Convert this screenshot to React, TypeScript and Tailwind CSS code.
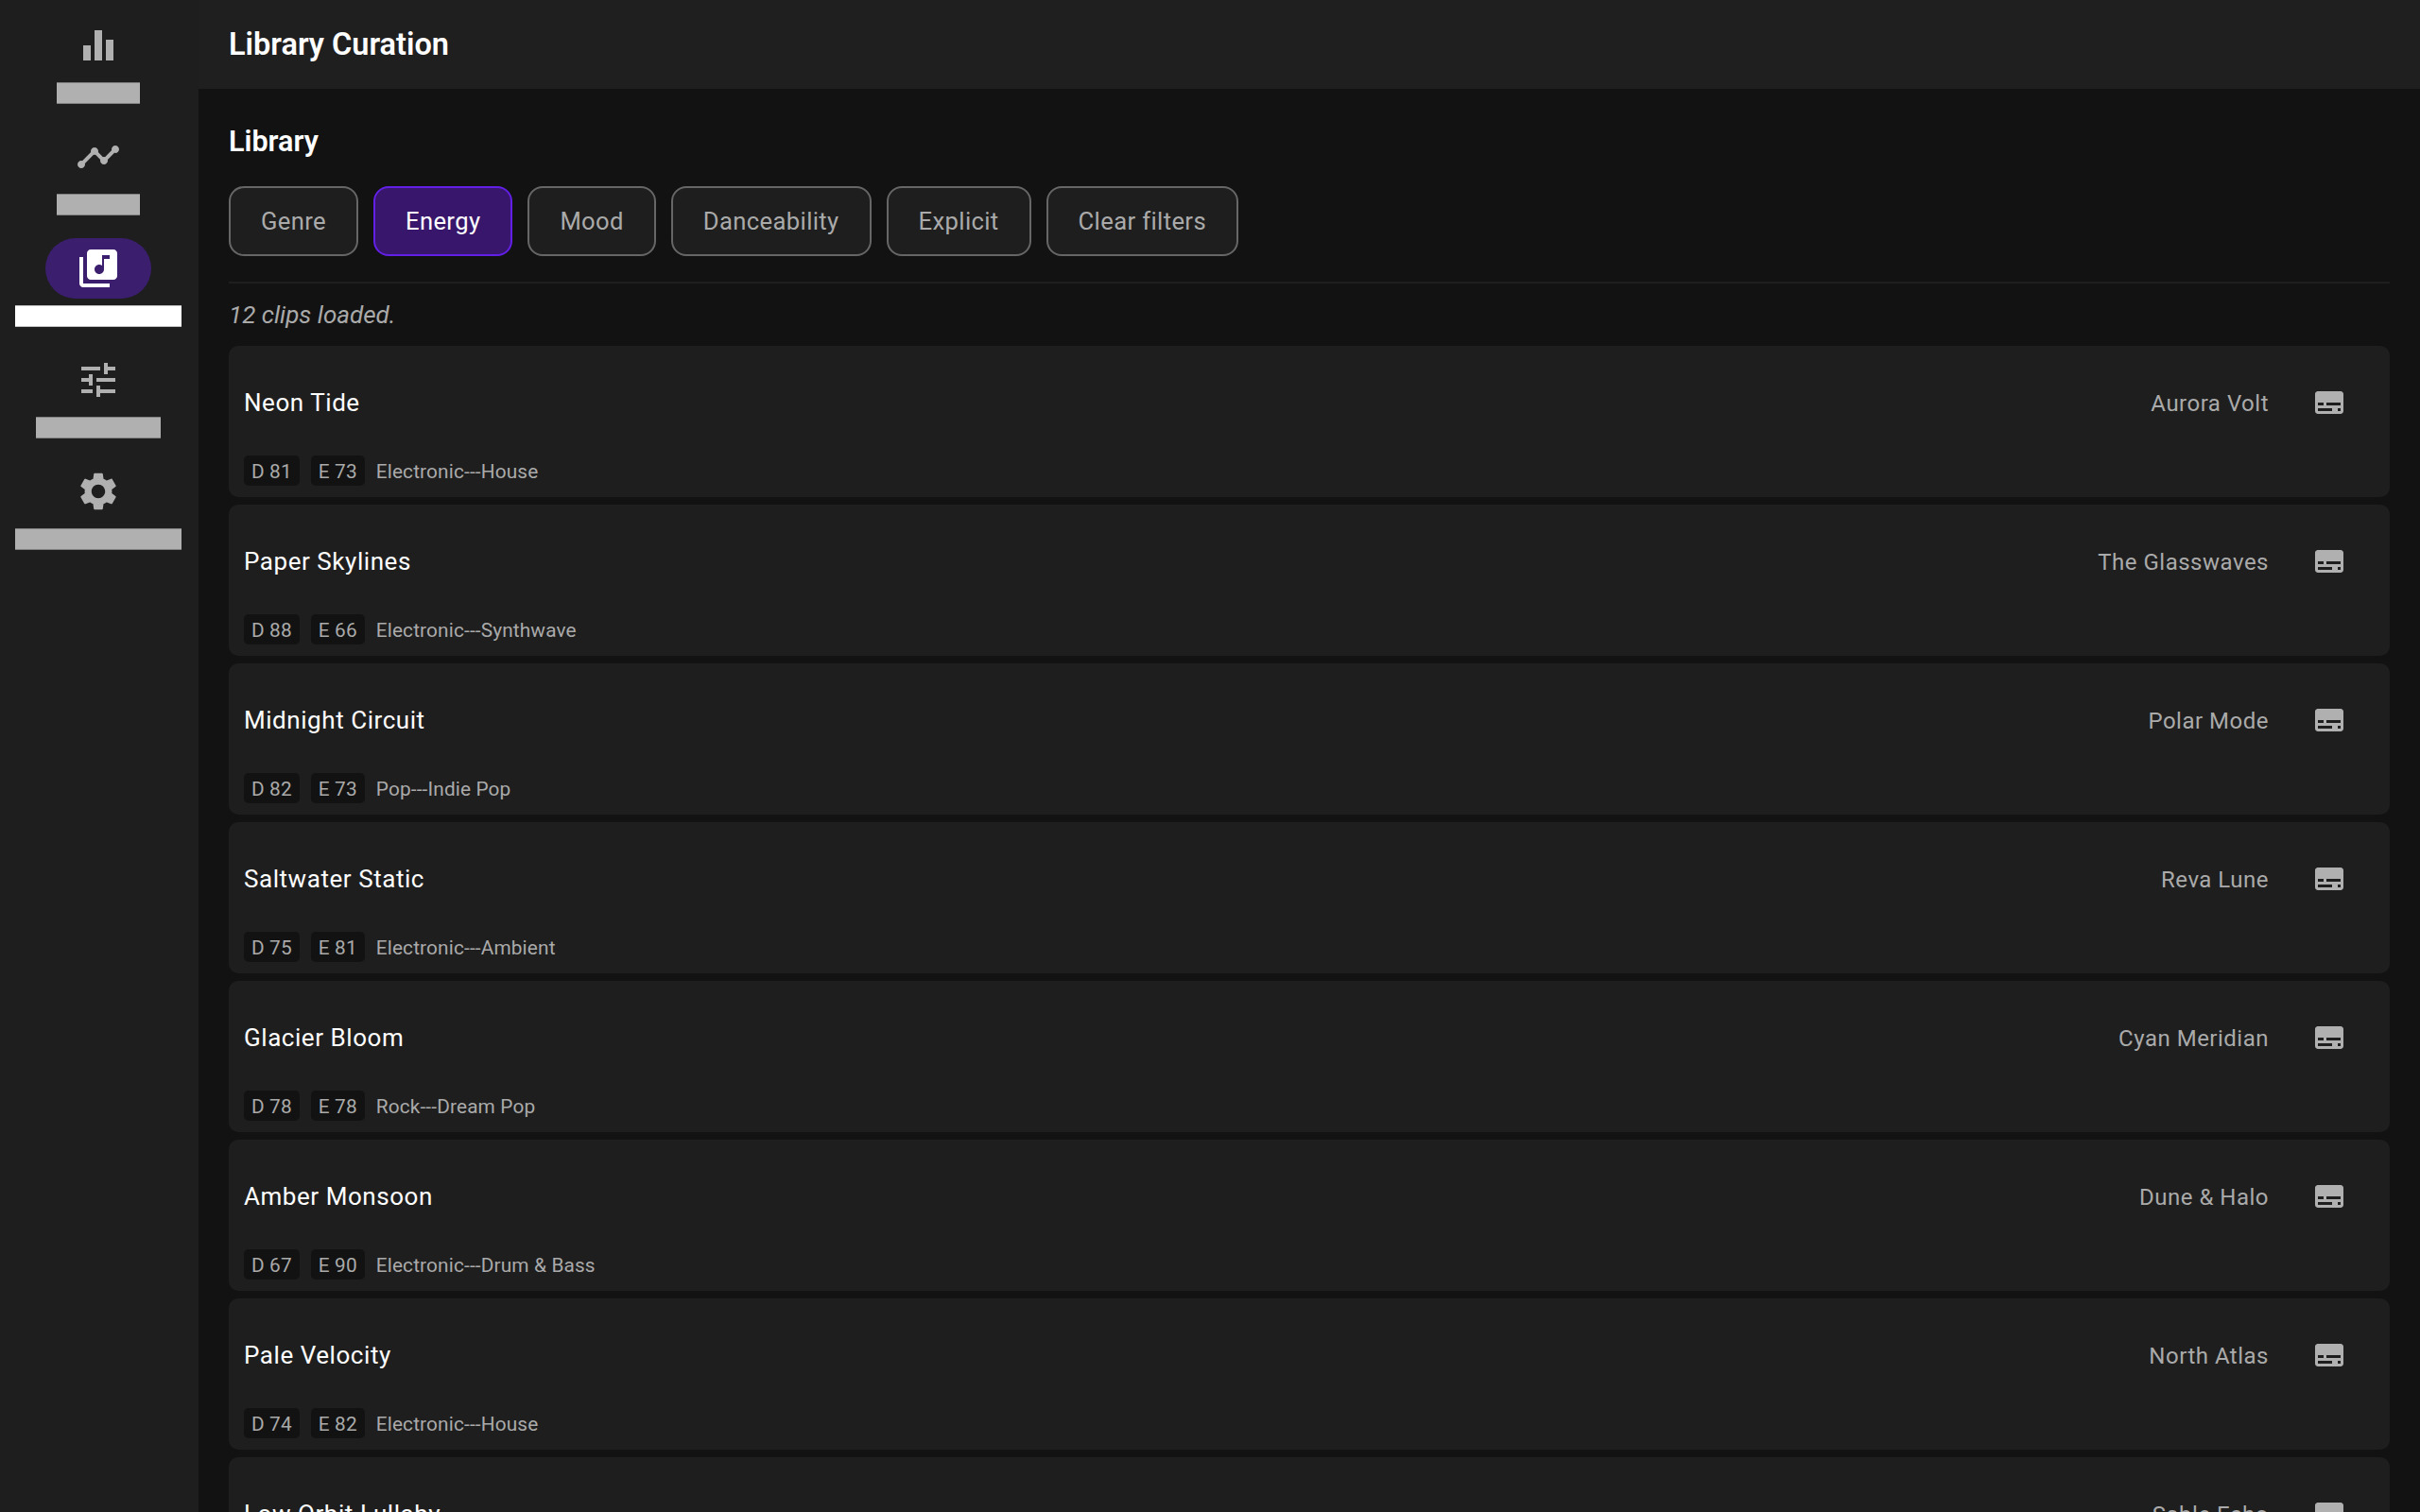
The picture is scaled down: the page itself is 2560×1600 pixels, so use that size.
const navItems = [
  { key: "stats", labelWidth: "w-[88px]", path: "M4 12h4v8H4zM10 4h4v16h-4zM16 9h4v11h-4z" },
  {
    key: "trends",
    labelWidth: "w-[88px]",
    path: "M23 8c0 1.1-.9 2-2 2-.18 0-.35-.02-.51-.07l-3.56 3.55c.05.16.07.34.07.52 0 1.1-.9 2-2 2s-2-.9-2-2c0-.18.02-.36.07-.52l-2.55-2.55c-.16.05-.34.07-.52.07s-.36-.02-.52-.07l-4.55 4.56c.05.16.07.33.07.51 0 1.1-.9 2-2 2s-2-.9-2-2 .9-2 2-2c.18 0 .35.02.51.07l4.56-4.55C8.02 9.36 8 9.18 8 9c0-1.1.9-2 2-2s2 .9 2 2c0 .18-.02.36-.07.52l2.55 2.55c.16-.05.34-.07.52-.07s.36.02.52.07l3.55-3.56C19.02 8.35 19 8.18 19 8c0-1.1.9-2 2-2s2 .9 2 2z",
  },
  {
    key: "library",
    labelWidth: "w-[176px]",
    active: true,
    path: "M20 2H8c-1.1 0-2 .9-2 2v12c0 1.1.9 2 2 2h12c1.1 0 2-.9 2-2V4c0-1.1-.9-2-2-2zm-2 5h-3v5.5c0 1.38-1.12 2.5-2.5 2.5S10 13.88 10 12.5s1.12-2.5 2.5-2.5c.57 0 1.08.19 1.5.51V5h4v2zM4 6H2v14c0 1.1.9 2 2 2h14v-2H4V6z",
  },
  {
    key: "tune",
    labelWidth: "w-[132px]",
    path: "M3 17v2h6v-2H3zM3 5v2h10V5H3zm10 16v-2h8v-2h-8v-2h-2v6h2zM7 9v2H3v2h4v2h2V9H7zm14 4v-2H11v2h10zm-6-4h2V7h4V5h-4V3h-2v6z",
  },
  {
    key: "settings",
    labelWidth: "w-[176px]",
    path: "M19.14 12.94c.04-.3.06-.61.06-.94 0-.32-.02-.64-.07-.94l2.03-1.58c.18-.14.23-.41.12-.61l-1.92-3.32c-.12-.22-.37-.29-.59-.22l-2.39.96c-.5-.38-1.03-.7-1.62-.94l-.36-2.54c-.04-.24-.24-.41-.48-.41h-3.84c-.24 0-.43.17-.47.41l-.36 2.54c-.59.24-1.13.57-1.62.94l-2.39-.96c-.22-.08-.47 0-.59.22L2.74 8.87c-.12.21-.08.47.12.61l2.03 1.58c-.05.3-.09.63-.09.94s.02.64.07.94l-2.03 1.58c-.18.14-.23.41-.12.61l1.92 3.32c.12.22.37.29.59.22l2.39-.96c.5.38 1.03.7 1.62.94l.36 2.54c.05.24.24.41.48.41h3.84c.24 0 .44-.17.47-.41l.36-2.54c.59-.24 1.13-.56 1.62-.94l2.39.96c.22.08.47 0 .59-.22l1.92-3.32c.12-.22.07-.47-.12-.61l-2.01-1.58zM12 15.6c-1.98 0-3.6-1.62-3.6-3.6s1.62-3.6 3.6-3.6 3.6 1.62 3.6 3.6-1.62 3.6-3.6 3.6z",
  },
];

const filters = ["Genre", "Energy", "Mood", "Danceability", "Explicit", "Clear filters"];

const clips = [
  { title: "Neon Tide", artist: "Aurora Volt", d: 81, e: 73, genre: "Electronic---House" },
  { title: "Paper Skylines", artist: "The Glasswaves", d: 88, e: 66, genre: "Electronic---Synthwave" },
  { title: "Midnight Circuit", artist: "Polar Mode", d: 82, e: 73, genre: "Pop---Indie Pop" },
  { title: "Saltwater Static", artist: "Reva Lune", d: 75, e: 81, genre: "Electronic---Ambient" },
  { title: "Glacier Bloom", artist: "Cyan Meridian", d: 78, e: 78, genre: "Rock---Dream Pop" },
  { title: "Amber Monsoon", artist: "Dune & Halo", d: 67, e: 90, genre: "Electronic---Drum & Bass" },
  { title: "Pale Velocity", artist: "North Atlas", d: 74, e: 82, genre: "Electronic---House" },
  { title: "Low Orbit Lullaby", artist: "Sable Echo", d: 70, e: 70, genre: "Electronic---Ambient" },
];

const Sidebar = () => {
  return (
    <nav className="flex w-[210px] shrink-0 flex-col items-center gap-6 bg-[#1e1e1e] pt-4 pr-0.5">
      {navItems.map((item) => (
        <div key={item.key} className="flex flex-col items-center">
          <div
            className={`flex h-16 w-28 items-center justify-center rounded-full ${
              item.active ? "bg-[#3b1f6e] text-white" : "text-[#b0b0b0]"
            }`}
          >
            <svg viewBox="0 0 24 24" className="h-12 w-12" fill="currentColor">
              <path d={item.path} />
            </svg>
          </div>
          {/* label is blanked out in the design */}
          <div
            className={`mt-[7px] h-[23px] border-y ${item.labelWidth} ${
              item.active ? "border-[#c4c4c4] bg-white" : "border-[#808080] bg-[#b0b0b0]"
            }`}
          />
        </div>
      ))}
    </nav>
  );
};

type ClipRowProps = {
  title: string;
  artist: string;
  d: number;
  e: number;
  genre: string;
};

const ClipRow = ({ title, artist, d, e, genre }: ClipRowProps) => {
  return (
    <div className="h-[160px] shrink-0 rounded-[10px] bg-[#1e1e1e] pt-[42px] pr-[46px] pl-4">
      <div className="flex h-9 items-center justify-between">
        <span className="text-[26px] tracking-[0.55px] text-white">{title}</span>
        <div className="flex items-center gap-[46px]">
          <span className="pt-0.5 text-[24px] tracking-[0.5px] text-[#aaaaaa]">{artist}</span>
          <svg viewBox="0 0 24 24" className="h-9 w-9 text-[#b0b0b0]" fill="currentColor">
            <path d="M20 4H4c-1.1 0-2 .9-2 2v12c0 1.1.9 2 2 2h16c1.1 0 2-.9 2-2V6c0-1.1-.9-2-2-2zM4 12h4v2H4v-2zm10 6H4v-2h10v2zm6 0h-2v-2h2v2zm0-4H10v-2h10v2z" />
          </svg>
        </div>
      </div>
      <div className="mt-[38px] flex h-8 items-center gap-3 text-[20.8px] tracking-[0.15px] text-[#aaaaaa]">
        <span className="flex h-8 items-center rounded-[5px] bg-[#121212] px-2 pt-1">D {d}</span>
        <span className="flex h-8 items-center rounded-[5px] bg-[#121212] px-2 pt-1">E {e}</span>
        <span className="flex h-8 items-center pt-1">{genre}</span>
      </div>
    </div>
  );
};

export default function App() {
  return (
    <div className="flex h-screen w-screen overflow-hidden bg-[#121212] font-['Roboto',sans-serif]">
      <Sidebar />
      <div className="flex min-w-0 flex-1 flex-col">
        <header className="flex h-[94px] shrink-0 items-center bg-[#1f1f1f] px-8">
          <h1 className="text-[32.5px] font-semibold text-white">Library Curation</h1>
        </header>
        <main className="flex min-h-0 flex-1 flex-col overflow-hidden px-8">
          <h2 className="mt-[34px] text-[30.5px] leading-[44px] font-semibold text-white">Library</h2>
          {/* filter buttons */}
          <div className="mt-[25px] flex gap-4">
            {filters.map((f) => (
              <button
                key={f}
                className={`h-[74px] rounded-2xl border-2 px-8 text-[25.6px] tracking-[0.37px] ${
                  f === "Energy"
                    ? "border-[#6220e6] bg-[#37166b] text-white"
                    : "border-[#666666] bg-[#1e1e1e] text-[#aaaaaa]"
                }`}
              >
                {f}
              </button>
            ))}
          </div>
          <div className="mt-[27px] h-0.5 shrink-0 bg-[#1e1e1e]" />
          <p className="mt-[17px] text-[26px] leading-[32px] text-[#aaaaaa] italic">12 clips loaded.</p>
          <div className="mt-[17px] flex flex-col gap-2">
            {clips.map((clip) => (
              <ClipRow key={clip.title} {...clip} />
            ))}
          </div>
        </main>
      </div>
    </div>
  );
}
